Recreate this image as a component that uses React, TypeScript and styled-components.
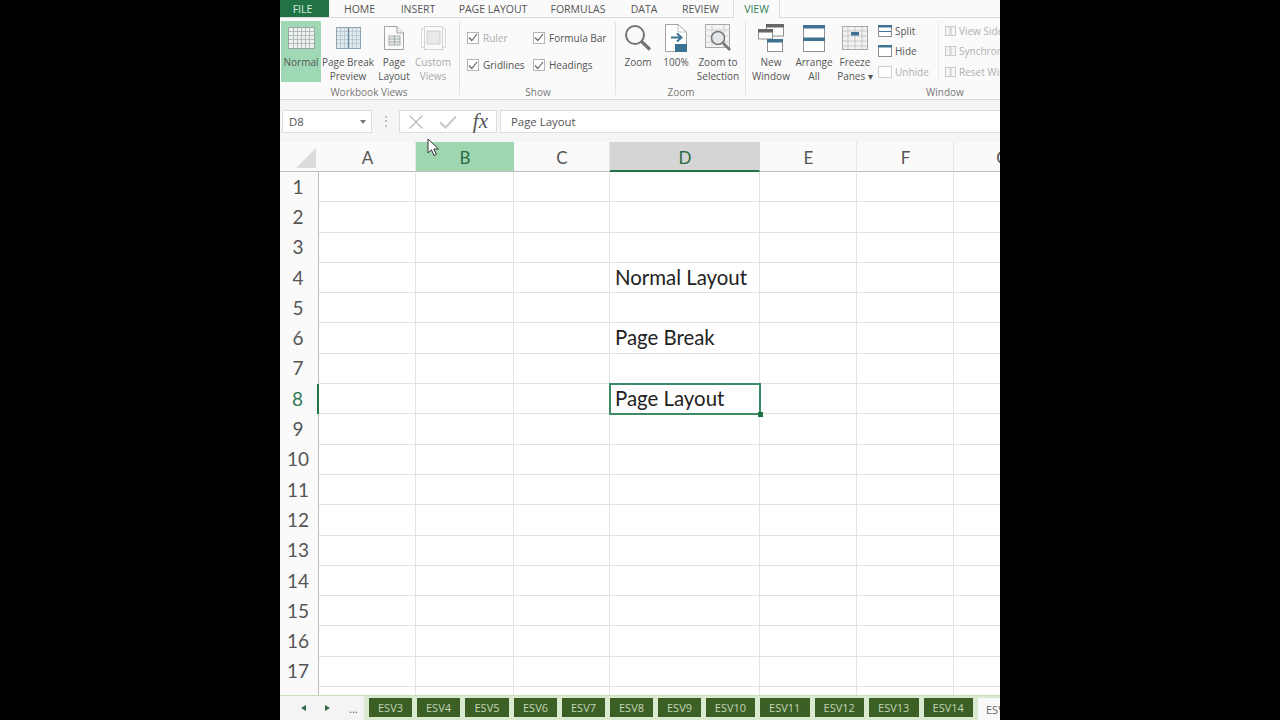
import React from "react";
import styled, { createGlobalStyle } from "styled-components";

const UI_FONT = `"Open Sans", "Noto Sans", "Liberation Sans", sans-serif`;
const CELL_FONT = `Lato, "Open Sans", "Liberation Sans", sans-serif`;

const GlobalStyle = createGlobalStyle`
  html, body {
    margin: 0;
    background: #000;
  }
`;

const tabs = [
  { label: "HOME", width: 61 },
  { label: "INSERT", width: 56 },
  { label: "PAGE LAYOUT", width: 94 },
  { label: "FORMULAS", width: 76 },
  { label: "DATA", width: 56 },
  { label: "REVIEW", width: 57 },
];

const columns = ["A", "B", "C", "D", "E", "F", "G"];
const rows = Array.from({ length: 18 }, (_, i) => i + 1);
const cellText: Record<number, string> = { 4: "Normal Layout", 6: "Page Break", 8: "Page Layout" };

const sheets = [
  { name: "ESV3", width: 43 },
  { name: "ESV4", width: 43 },
  { name: "ESV5", width: 44 },
  { name: "ESV6", width: 43 },
  { name: "ESV7", width: 43 },
  { name: "ESV8", width: 43 },
  { name: "ESV9", width: 43 },
  { name: "ESV10", width: 49 },
  { name: "ESV11", width: 49.5 },
  { name: "ESV12", width: 49.5 },
  { name: "ESV13", width: 49.5 },
  { name: "ESV14", width: 49.5 },
];

const NormalIcon = () => (
  <svg width="27" height="22" viewBox="0 0 27 22">
    <rect x="0.5" y="0.5" width="26" height="21" fill="#eef3f1" stroke="#98a5a1" />
    {[5, 9, 13, 17, 21].map((x) => (
      <path key={x} d={`M${x + 0.5} 1V21`} stroke="#b3bdba" />
    ))}
    {[4.5, 8.5, 12.5, 16.5].map((y) => (
      <path key={y} d={`M1 ${y}H26`} stroke="#b3bdba" />
    ))}
  </svg>
);

const PageBreakIcon = () => (
  <svg width="25" height="22" viewBox="0 0 25 22">
    <rect x="0.5" y="0.5" width="24" height="21" fill="#dfe9ee" stroke="#8ea5b1" />
    {[4.5, 8.5, 16.5, 20.5].map((x) => (
      <path key={x} d={`M${x} 1V21`} stroke="#bccbd2" />
    ))}
    {[4.5, 8.5, 12.5, 16.5].map((y) => (
      <path key={y} d={`M1 ${y}H24`} stroke="#bccbd2" />
    ))}
    <path d="M12.5 1V21" stroke="#6a8a9c" strokeWidth="1.4" />
  </svg>
);

const PageLayoutIcon = () => (
  <svg width="20" height="24" viewBox="0 0 20 24">
    <path d="M.5.5H13L19.5 7V23.5H.5Z" fill="#fbfbfb" stroke="#a3a3a3" />
    <path d="M13 .5V7H19.5" fill="#eee" stroke="#a3a3a3" />
    <rect x="5" y="10" width="11" height="9" fill="#e7ecea" stroke="#a3aca9" />
    <path d="M5 13H16M5 16H16M10.5 10V19" stroke="#a3aca9" />
  </svg>
);

const CustomViewsIcon = () => (
  <svg width="25" height="24" viewBox="0 0 25 24">
    <rect x="0.5" y="2.5" width="24" height="19" fill="none" stroke="#dadada" />
    <rect x="3.5" y="0.5" width="18" height="23" fill="#fafafa" stroke="#d4d4d4" />
    <rect x="6" y="5" width="13" height="13" fill="#e9e9e9" stroke="#cfcfcf" />
  </svg>
);

const ZoomIcon = () => (
  <svg width="28" height="28" viewBox="0 0 28 28">
    <circle cx="11" cy="11" r="9" fill="none" stroke="#757575" strokeWidth="2" />
    <path d="M17.5 17.5L26 25.5" stroke="#757575" strokeWidth="3.4" />
  </svg>
);

const HundredIcon = () => (
  <svg width="24" height="28" viewBox="0 0 24 28">
    <path d="M1.5.5H14L22.5 8V27.5H1.5Z" fill="#fff" stroke="#a3a3a3" />
    <path d="M14 .5V8H22.5" fill="none" stroke="#a3a3a3" strokeDasharray="2 1" />
    <path d="M7 13.5H16M13 9.5L17.5 13.5L13 17.5" fill="none" stroke="#3b7492" strokeWidth="2" />
    <rect x="11" y="20" width="12" height="8" fill="#3b7492" />
  </svg>
);

const ZoomSelectionIcon = () => (
  <svg width="28" height="28" viewBox="0 0 28 28">
    <rect x="1.5" y="0.5" width="24" height="23" fill="#f4f4f4" stroke="#a8a8a8" />
    <path d="M1 6H26M1 12H26M1 18H26M8 1V23M20 1V23" stroke="#cfcfcf" />
    <circle cx="14" cy="14" r="6.5" fill="#e1e6e8" stroke="#777" strokeWidth="1.5" />
    <path d="M19 19L26 26" stroke="#777" strokeWidth="2.6" />
  </svg>
);

const NewWindowIcon = () => (
  <svg width="26" height="28" viewBox="0 0 26 28">
    <rect x="8.5" y="1" width="17" height="11" fill="#fff" stroke="#8f8f8f" />
    <rect x="8" y="0" width="18" height="3.5" fill="#666" />
    <rect x="0.5" y="6" width="14" height="9" fill="#fff" stroke="#8f8f8f" />
    <rect x="0" y="5" width="15" height="3.5" fill="#666" />
    <rect x="9.5" y="16" width="15" height="11.5" fill="#fff" stroke="#8f8f8f" />
    <rect x="9" y="15" width="16" height="3.5" fill="#3f7391" />
  </svg>
);

const ArrangeIcon = () => (
  <svg width="22" height="27" viewBox="0 0 22 27">
    <rect x="0.5" y="0.5" width="21" height="26" fill="#fff" stroke="#8f8f8f" />
    <rect x="0" y="0" width="22" height="3.5" fill="#3f7391" />
    <rect x="0" y="12.5" width="22" height="3.5" fill="#3f7391" />
  </svg>
);

const FreezeIcon = () => (
  <svg width="26" height="24" viewBox="0 0 26 24">
    <rect x="0.5" y="0.5" width="25" height="23" fill="#f2f2f2" stroke="#a6a6a6" />
    <path d="M1 5H25M1 10H25M1 15H25M1 20H25M6 1V23M13 1V23M20 1V23" stroke="#c6c6c6" />
    <rect x="9" y="6" width="8" height="3.5" fill="#3f7391" />
  </svg>
);

const SmallWindowIcon = ({ mode }: { mode: "split" | "hide" | "unhide" }) => (
  <svg width="14" height="12" viewBox="0 0 14 12">
    <rect x="0.5" y="0.5" width="13" height="11" fill="#fff" stroke={mode === "unhide" ? "#cfcfcf" : "#8f8f8f"} />
    {mode !== "unhide" && <rect x="0" y="0" width="14" height="2.5" fill="#3f7391" />}
    {mode === "split" && <path d="M1 6.5H13" stroke="#3f7391" />}
  </svg>
);

const SideBySideIcon = () => (
  <svg width="11" height="10" viewBox="0 0 11 10">
    <rect x="0.5" y="0.5" width="4.5" height="9" fill="#f6f6f6" stroke="#c9c9c9" />
    <rect x="6" y="0.5" width="4.5" height="9" fill="#f6f6f6" stroke="#c9c9c9" />
  </svg>
);

const CheckMark = () => (
  <svg width="10" height="9" viewBox="0 0 10 9">
    <path d="M1 4.5L3.8 7.5L9 1" fill="none" stroke="currentColor" strokeWidth="1.2" />
  </svg>
);

const CancelIcon = () => (
  <svg width="16" height="16" viewBox="0 0 16 16">
    <path d="M1.5 1.5L14.5 14.5M14.5 1.5L1.5 14.5" stroke="#c4c4c4" strokeWidth="1.6" />
  </svg>
);

const EnterIcon = () => (
  <svg width="18" height="14" viewBox="0 0 18 14">
    <path d="M1 7.5L6.5 12.5L17 1.5" fill="none" stroke="#c9c9c9" strokeWidth="2.2" />
  </svg>
);

const Cursor = () => (
  <svg width="13" height="19" viewBox="0 0 13 19">
    <path d="M1 1V15L4.4 11.8L7 17.5L9.4 16.4L6.8 11H11.5Z" fill="#fff" stroke="#333" />
  </svg>
);

const BigButton = ({
  width,
  active,
  dim,
  icon,
  lines,
}: {
  width: number;
  active?: boolean;
  dim?: boolean;
  icon: React.ReactNode;
  lines: string[];
}) => (
  <BigButtonBox $width={width} $active={active} $dim={dim}>
    <BigIconSlot>{icon}</BigIconSlot>
    {lines.map((line) => (
      <BigLabel key={line}>{line}</BigLabel>
    ))}
  </BigButtonBox>
);

const ShowOption = ({ label, dim }: { label: string; dim?: boolean }) => (
  <OptionRow $dim={dim}>
    <CheckBox>
      <CheckMark />
    </CheckBox>
    {label}
  </OptionRow>
);

export default function App() {
  return (
    <Page>
      <GlobalStyle />
      <Screen>
        <TabStrip>
          <FileTab>FILE</FileTab>
          {tabs.map((tab) => (
            <RibbonTab key={tab.label} $width={tab.width}>
              {tab.label}
            </RibbonTab>
          ))}
          <ActiveTab>VIEW</ActiveTab>
        </TabStrip>

        <Ribbon>
          <Group $width={180} $pad={1}>
            <GroupBody>
              <BigButton width={40} active icon={<NormalIcon />} lines={["Normal"]} />
              <BigButton width={54} icon={<PageBreakIcon />} lines={["Page Break", "Preview"]} />
              <BigButton width={38} icon={<PageLayoutIcon />} lines={["Page", "Layout"]} />
              <BigButton width={40} dim icon={<CustomViewsIcon />} lines={["Custom", "Views"]} />
            </GroupBody>
            <GroupLabel>Workbook Views</GroupLabel>
          </Group>

          <Group $width={156} $pad={7}>
            <ShowGrid>
              <ShowOption label="Ruler" dim />
              <ShowOption label="Formula Bar" />
              <ShowOption label="Gridlines" />
              <ShowOption label="Headings" />
            </ShowGrid>
            <ShowLabel>Show</ShowLabel>
          </Group>

          <Group $width={130} $pad={3}>
            <GroupBody>
              <BigButton width={38} icon={<ZoomIcon />} lines={["Zoom"]} />
              <BigButton width={38} icon={<HundredIcon />} lines={["100%"]} />
              <BigButton width={46} icon={<ZoomSelectionIcon />} lines={["Zoom to", "Selection"]} />
            </GroupBody>
            <GroupLabel>Zoom</GroupLabel>
          </Group>

          <Group $width={254} $pad={3} $last>
            <GroupBody>
              <BigButton width={44} icon={<NewWindowIcon />} lines={["New", "Window"]} />
              <BigButton width={42} icon={<ArrangeIcon />} lines={["Arrange", "All"]} />
              <BigButton width={40} icon={<FreezeIcon />} lines={["Freeze", "Panes ▾"]} />
              <SmallColumn>
                <SmallItem>
                  <SmallWindowIcon mode="split" />
                  Split
                </SmallItem>
                <SmallItem>
                  <SmallWindowIcon mode="hide" />
                  Hide
                </SmallItem>
                <SmallItem $dim>
                  <SmallWindowIcon mode="unhide" />
                  Unhide
                </SmallItem>
              </SmallColumn>
              <SideColumn>
                <SmallItem $dim>
                  <SideBySideIcon />
                  View Side by Side
                </SmallItem>
                <SmallItem $dim>
                  <SideBySideIcon />
                  Synchronous Scrolling
                </SmallItem>
                <SmallItem $dim>
                  <SideBySideIcon />
                  Reset Window Position
                </SmallItem>
              </SideColumn>
            </GroupBody>
            <WindowLabel>Window</WindowLabel>
          </Group>
        </Ribbon>

        <FormulaArea>
          <NameBox>
            D8
            <Caret />
          </NameBox>
          <Dots>⋮</Dots>
          <FormulaButtons>
            <CancelIcon />
            <EnterIcon />
            <FxGlyph>fx</FxGlyph>
          </FormulaButtons>
          <FormulaInput>Page Layout</FormulaInput>
        </FormulaArea>

        <Sheet>
          <HeaderRow>
            <Corner />
            {columns.map((col) => (
              <ColumnHeader key={col} $hover={col === "B"} $selected={col === "D"}>
                {col}
              </ColumnHeader>
            ))}
          </HeaderRow>
          <RowsArea>
            {rows.map((row) => (
              <GridRow key={row}>
                <RowHeader $selected={row === 8}>{row}</RowHeader>
                {columns.map((col) => (
                  <Cell key={col} $selected={col === "D" && row === 8}>
                    {col === "D" ? cellText[row] : null}
                  </Cell>
                ))}
              </GridRow>
            ))}
          </RowsArea>
        </Sheet>

        <SheetBar>
          <SheetNav>
            <NavArrow $dir="left" />
            <NavArrow $dir="right" />
            <NavDots>...</NavDots>
          </SheetNav>
          {sheets.map((sheet) => (
            <SheetTab key={sheet.name} $width={sheet.width}>
              {sheet.name}
            </SheetTab>
          ))}
          <CurrentSheet>ESV15</CurrentSheet>
        </SheetBar>

        <PointerSpot>
          <Cursor />
        </PointerSpot>
      </Screen>
    </Page>
  );
}

// styles

const COLUMN_TEMPLATE = "39px 97px 98px 96px 150px 97px 97px 97px";

const Page = styled.div`
  display: flex;
  justify-content: center;
  width: 100%;
  height: 720px;
  background: #000;
  overflow: hidden;
`;

const Screen = styled.div`
  position: relative;
  display: flex;
  flex-direction: column;
  width: 720px;
  height: 720px;
  background: #fbfbfb;
  overflow: hidden;
  font-family: ${UI_FONT};
`;

const TabStrip = styled.div`
  display: flex;
  flex: none;
  height: 18px;
  background: #fafafa;
  border-bottom: 1px solid #dcdcdc;
  box-sizing: border-box;
  font-size: 10.5px;
  color: #555;
`;

const FileTab = styled.div`
  width: 49px;
  display: flex;
  align-items: center;
  justify-content: center;
  padding-right: 4px;
  box-sizing: border-box;
  background: #217346;
  color: #d9eee1;
`;

const RibbonTab = styled.div<{ $width: number }>`
  width: ${(p) => p.$width}px;
  display: flex;
  align-items: center;
  justify-content: center;
`;

const ActiveTab = styled.div`
  width: 47px;
  height: 18px;
  margin-left: 4px;
  display: flex;
  align-items: center;
  justify-content: center;
  box-sizing: border-box;
  background: #fafafa;
  border: 1px solid #dcdcdc;
  border-top: none;
  border-bottom: none;
  color: #2f8058;
`;

const Ribbon = styled.div`
  display: flex;
  flex: none;
  height: 82px;
  background: #fafafa;
  border-bottom: 1px solid #d6d6d6;
  box-sizing: border-box;
`;

const Group = styled.div<{ $width: number; $pad: number; $last?: boolean }>`
  position: relative;
  flex: none;
  display: flex;
  flex-direction: column;
  width: ${(p) => p.$width}px;
  padding: 3px 0 0 ${(p) => p.$pad}px;
  box-sizing: border-box;
  &::after {
    content: "";
    position: absolute;
    right: 0;
    top: 4px;
    bottom: 4px;
    width: 1px;
    background: ${(p) => (p.$last ? "transparent" : "#e2e2e2")};
  }
`;

const GroupBody = styled.div`
  display: flex;
  height: 61px;
`;

const GroupLabel = styled.div`
  margin: 3px 0 0 -3px;
  text-align: center;
  font-size: 10px;
  line-height: 14px;
  color: #777;
`;

const ShowLabel = styled(GroupLabel)`
  margin-left: -7px;
`;

const WindowLabel = styled(GroupLabel)`
  margin-left: 0;
  width: 250px;
  text-align: left;
  text-indent: 177px;
`;

const BigButtonBox = styled.div<{ $width: number; $active?: boolean; $dim?: boolean }>`
  flex: none;
  display: flex;
  flex-direction: column;
  align-items: center;
  width: ${(p) => p.$width}px;
  height: 61px;
  background: ${(p) => (p.$active ? "#9fd8b4" : "transparent")};
  color: ${(p) => (p.$dim ? "#aaa" : "#555")};
`;

const BigIconSlot = styled.div`
  display: flex;
  align-items: center;
  justify-content: center;
  height: 34px;
  flex: none;
`;

const BigLabel = styled.div`
  font-size: 10px;
  line-height: 14px;
  white-space: nowrap;
`;

const ShowGrid = styled.div`
  display: grid;
  grid-template-columns: 66px auto;
  grid-auto-rows: 27.5px;
  align-items: center;
  height: 61px;
  padding-top: 3px;
  box-sizing: border-box;
`;

const OptionRow = styled.div<{ $dim?: boolean }>`
  display: flex;
  align-items: center;
  gap: 4px;
  font-size: 10px;
  white-space: nowrap;
  color: ${(p) => (p.$dim ? "#aaa" : "#555")};
`;

const CheckBox = styled.div`
  width: 12px;
  height: 12px;
  display: flex;
  align-items: center;
  justify-content: center;
  box-sizing: border-box;
  border: 1px solid #b5b5b5;
  background: #fff;
  color: #666;
`;

const SmallColumn = styled.div`
  display: flex;
  flex-direction: column;
  width: 63px;
  padding: 0 0 0 3px;
  box-sizing: border-box;
`;

const SideColumn = styled(SmallColumn)`
  width: 62px;
  overflow: hidden;
  padding-left: 6px;
  border-left: 1px solid #ececec;
  height: 61px;
`;

const SmallItem = styled.div<{ $dim?: boolean }>`
  display: flex;
  align-items: center;
  gap: 3px;
  height: 20.5px;
  font-size: 10px;
  white-space: nowrap;
  color: ${(p) => (p.$dim ? "#b0b0b0" : "#555")};
  svg {
    flex: none;
  }
`;

const FormulaArea = styled.div`
  display: flex;
  flex: none;
  align-items: flex-start;
  height: 42px;
  padding: 10px 0 0 2px;
  box-sizing: border-box;
  background: #f5f5f5;
`;

const NameBox = styled.div`
  position: relative;
  width: 90px;
  height: 23px;
  padding-left: 6px;
  box-sizing: border-box;
  background: #fff;
  border: 1px solid #dedede;
  font-size: 11.4px;
  line-height: 22px;
  color: #555;
`;

const Caret = styled.span`
  position: absolute;
  right: 5px;
  top: 9px;
  border-left: 3px solid transparent;
  border-right: 3px solid transparent;
  border-top: 4px solid #777;
`;

const Dots = styled.div`
  width: 27px;
  text-align: center;
  font-size: 12px;
  line-height: 22px;
  color: #aaa;
`;

const FormulaButtons = styled.div`
  display: flex;
  align-items: center;
  justify-content: space-between;
  width: 98px;
  height: 23px;
  padding: 0 8px;
  box-sizing: border-box;
  background: #fff;
  border: 1px solid #dedede;
`;

const FxGlyph = styled.span`
  font-family: "Liberation Serif", serif;
  font-style: italic;
  font-size: 21px;
  line-height: 1;
  color: #555;
`;

const FormulaInput = styled.div`
  flex: 1;
  height: 23px;
  margin-left: 3px;
  padding-left: 10px;
  box-sizing: border-box;
  background: #fff;
  border: 1px solid #dedede;
  border-right: none;
  font-size: 11.4px;
  line-height: 22px;
  color: #555;
`;

const Sheet = styled.div`
  display: flex;
  flex: 1;
  min-height: 0;
  flex-direction: column;
  background: #fff;
`;

const HeaderRow = styled.div`
  display: grid;
  flex: none;
  grid-template-columns: ${COLUMN_TEMPLATE};
  height: 30px;
  background: #fafafa;
`;

const Corner = styled.div`
  position: relative;
  border-bottom: 1px solid #bdbdbd;
  &::after {
    content: "";
    position: absolute;
    right: 3px;
    bottom: 3px;
    border-left: 20px solid transparent;
    border-bottom: 20px solid #dcdcdc;
  }
`;

const ColumnHeader = styled.div<{ $hover?: boolean; $selected?: boolean }>`
  display: flex;
  align-items: center;
  justify-content: center;
  padding: ${(p) => (p.$selected ? "2px" : "1px")} 0 0 1px;
  box-sizing: border-box;
  font-family: ${CELL_FONT};
  font-size: 17px;
  background: ${(p) => (p.$hover ? "#9dd6af" : p.$selected ? "#d5d5d5" : "transparent")};
  border-bottom: ${(p) => (p.$selected ? "2px solid #217346" : "1px solid #bdbdbd")};
  border-right: 1px solid ${(p) => (p.$hover || p.$selected ? "transparent" : "#e6e6e6")};
  color: ${(p) => (p.$hover || p.$selected ? "#2d6a45" : "#555")};
`;

const RowsArea = styled.div`
  flex: 1;
  min-height: 0;
  overflow: hidden;
`;

const GridRow = styled.div`
  display: grid;
  grid-template-columns: ${COLUMN_TEMPLATE};
  height: 30.3px;
`;

const RowHeader = styled.div<{ $selected?: boolean }>`
  display: flex;
  align-items: center;
  justify-content: center;
  padding: 0 2px 2px 0;
  box-sizing: border-box;
  font-family: ${CELL_FONT};
  font-size: 19px;
  background: #fafafa;
  border-right: ${(p) => (p.$selected ? "2px solid #217346" : "1px solid #bdbdbd")};
  color: ${(p) => (p.$selected ? "#2d7a50" : "#555")};
`;

const Cell = styled.div<{ $selected?: boolean }>`
  position: relative;
  z-index: ${(p) => (p.$selected ? 1 : "auto")};
  display: flex;
  align-items: center;
  padding: 0 0 2px 5px;
  box-sizing: border-box;
  overflow: visible;
  white-space: nowrap;
  font-family: ${CELL_FONT};
  font-size: 20.4px;
  color: #222;
  border-right: ${(p) => (p.$selected ? "none" : "1px solid #e2e2e2")};
  border-bottom: ${(p) => (p.$selected ? "none" : "1px solid #e2e2e2")};
  box-shadow: ${(p) => (p.$selected ? "inset 0 0 0 1px #3d8a66, 0 0 0 1px #3d8a66" : "none")};
  &::after {
    content: "";
    display: ${(p) => (p.$selected ? "block" : "none")};
    position: absolute;
    right: -3px;
    bottom: -3px;
    width: 5px;
    height: 5px;
    background: #217346;
  }
`;

const SheetBar = styled.div`
  display: flex;
  flex: none;
  align-items: flex-end;
  gap: 5px;
  height: 25px;
  padding-bottom: 3px;
  box-sizing: border-box;
  background: #d9ead0;
  border-top: 1px solid #c9dcc0;
  overflow: hidden;
`;

const SheetNav = styled.div`
  position: relative;
  align-self: stretch;
  flex: none;
  width: 84px;
  margin-bottom: -3px;
  display: flex;
  align-items: center;
  padding-left: 21px;
  box-sizing: border-box;
  gap: 19px;
  background: #f4f4f4;
`;

const NavArrow = styled.span<{ $dir: "left" | "right" }>`
  width: 0;
  height: 0;
  border-top: 3.5px solid transparent;
  border-bottom: 3.5px solid transparent;
  border-left: ${(p) => (p.$dir === "right" ? "5px solid #2f6b4a" : "none")};
  border-right: ${(p) => (p.$dir === "left" ? "5px solid #2f6b4a" : "none")};
`;

const NavDots = styled.span`
  font-size: 11px;
  color: #555;
`;

const SheetTab = styled.div<{ $width: number }>`
  flex: none;
  width: ${(p) => p.$width}px;
  height: 19px;
  display: flex;
  align-items: center;
  justify-content: center;
  font-size: 11px;
  background: #3b5f24;
  color: #c3d6b8;
`;

const CurrentSheet = styled.div`
  flex: none;
  width: 60px;
  height: 22px;
  margin-bottom: -3px;
  padding-left: 8px;
  box-sizing: border-box;
  display: flex;
  align-items: center;
  font-size: 11px;
  background: #f9f9f9;
  color: #666;
`;

const PointerSpot = styled.div`
  position: absolute;
  left: 147px;
  top: 138px;
  line-height: 0;
`;
